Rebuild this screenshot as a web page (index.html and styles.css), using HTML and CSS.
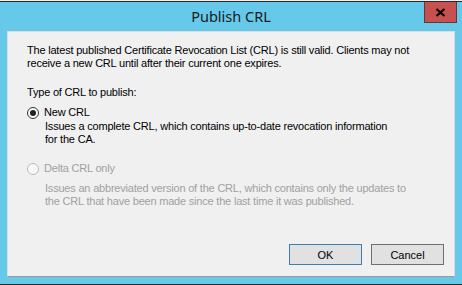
FILE: index.html
```html
<!DOCTYPE html>
<html lang="en">
<head>
    <meta charset="UTF-8">
    <meta name="viewport" content="width=device-width, initial-scale=1.0">
    <title>Publish CRL</title>
    <link rel="stylesheet" href="styles.css">
</head>
<body>
    <div class="window">
        <div class="titlebar">
            <span class="title">Publish CRL</span>
            <button class="close" type="button" aria-label="Close">
                <svg width="11" height="9" viewBox="0 0 11 9">
                    <path d="M1.5 1 L9.5 8 M9.5 1 L1.5 8" stroke="#000" stroke-width="2.2" fill="none"/>
                </svg>
            </button>
        </div>

        <div class="client">
            <p class="intro">The latest published Certificate Revocation List (CRL) is still valid. Clients may not<br>receive a new CRL until after their current one expires.</p>

            <p class="group-label">Type of CRL to publish:</p>

            <label class="option">
                <span class="radio checked"></span>
                <span>New CRL</span>
            </label>
            <p class="desc">Issues a complete CRL, which contains up-to-date revocation information<br>for the CA.</p>

            <label class="option disabled delta">
                <span class="radio"></span>
                <span>Delta CRL only</span>
            </label>
            <p class="desc disabled">Issues an abbreviated version of the CRL, which contains only the updates to<br>the CRL that have been made since the last time it was published.</p>

            <div class="buttons">
                <button type="button" class="btn default">OK</button>
                <button type="button" class="btn">Cancel</button>
            </div>
        </div>
    </div>
</body>
</html>
```

FILE: styles.css
```css
html {
    background: #f0f0f0;
}
body {
    margin: 0;
    padding-top: 1px;
    width: 462px;
    height: 285px;
    font-family: "Liberation Sans", Arial, sans-serif;
    font-size: 11px;
    letter-spacing: -0.2px;
    color: #000;
}
.window {
    height: 282px;
    background: #67c9ea;
    border-top: 1px solid #2b2b2b;
    border-bottom: 1px solid #2b2b2b;
    display: flex;
    flex-direction: column;
}
.titlebar {
    position: relative;
    height: 29px;
    display: flex;
    justify-content: center;
    align-items: center;
}
.title {
    font-family: "Noto Sans", "Open Sans", sans-serif;
    font-size: 14.5px;
    letter-spacing: 0;
    color: #1a1a1a;
    margin-top: -1px;
}
.close {
    position: absolute;
    top: 0;
    right: 5px;
    width: 33px;
    height: 21px;
    padding: 0;
    border: 1px solid #5a3a3a;
    border-top: none;
    background: #c75050;
    display: flex;
    justify-content: center;
    align-items: center;
}
.client {
    margin: 0 7px;
    height: 246px;
    box-sizing: border-box;
    background: #f0f0f0;
    border: 1px solid #dcdcdc;
    border-bottom-color: #9a9a9a;
    padding: 12px 10px 11px 19px;
    display: flex;
    flex-direction: column;
    line-height: 13px;
}
.client p {
    margin: 0;
    white-space: nowrap;
}
.group-label {
    margin-top: 16px !important;
}
.option {
    display: flex;
    align-items: center;
    gap: 5px;
    margin-top: 7px;
}
.option.delta {
    margin-top: 16px;
}
.radio {
    width: 10px;
    height: 10px;
    border: 1px solid #333;
    border-radius: 50%;
    background: #fbfbfb;
    display: flex;
    justify-content: center;
    align-items: center;
}
.radio.checked::after {
    content: "";
    width: 6px;
    height: 6px;
    border-radius: 50%;
    background: #222;
}
.option.disabled .radio {
    border-color: #bcbcbc;
    background: #f8f8f8;
}
.desc {
    margin-left: 18px !important;
    margin-top: 1px !important;
}
.disabled {
    color: #a0a0a0;
}
.desc.disabled {
    margin-top: 7px !important;
}
.buttons {
    margin-top: auto;
    display: flex;
    justify-content: flex-end;
    gap: 9px;
}
.btn {
    width: 73px;
    height: 21px;
    padding: 0;
    font-family: "Liberation Sans", Arial, sans-serif;
    font-size: 11px;
    letter-spacing: 0;
    color: #000;
    background: #e1e1e1;
    border: 1px solid #707070;
}
.btn.default {
    border-color: #3c7fb1;
}
```
